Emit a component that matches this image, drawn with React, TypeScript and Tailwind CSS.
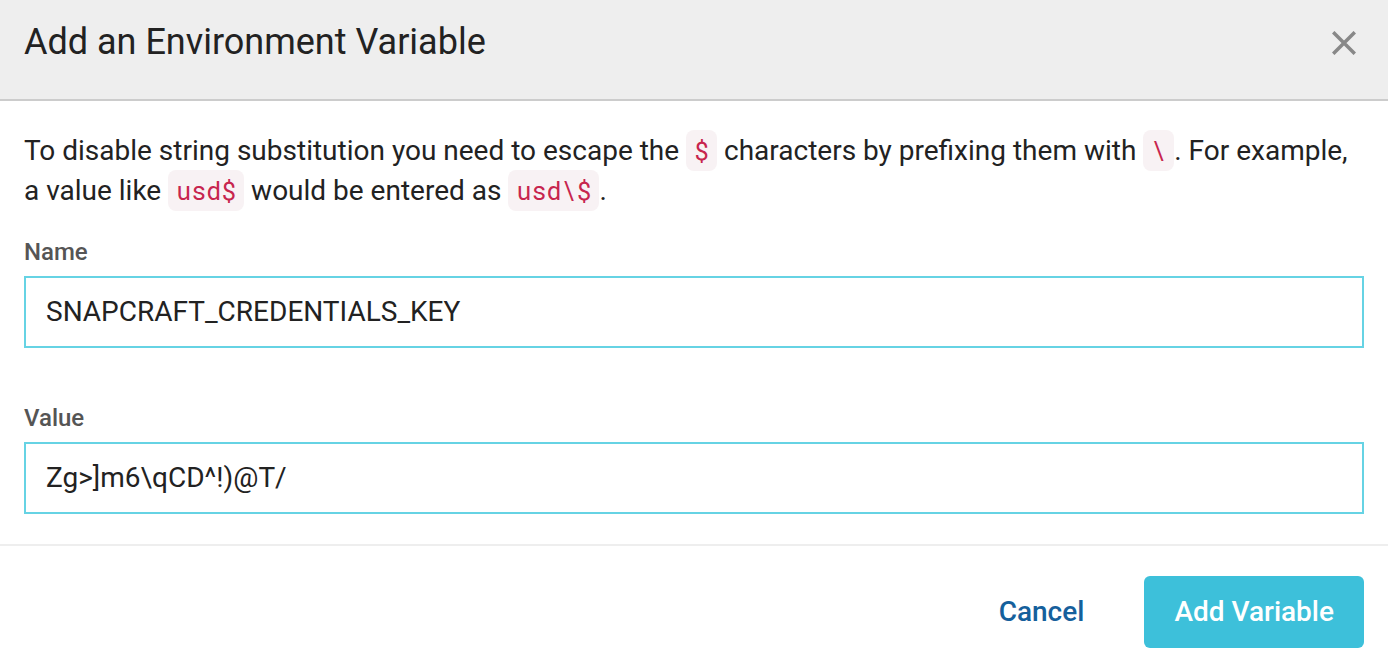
import { useState } from "react";
import type { ReactNode } from "react";

function Code({ children }: { children: ReactNode }) {
  return (
    <code className="rounded-lg bg-[#f8f2f4] px-2 py-1 font-['Roboto_Mono','Liberation_Mono',monospace] text-[25px] leading-none text-[#c7254e]">
      {children}
    </code>
  );
}

function Field({ id, label, initial }: { id: string; label: string; initial: string }) {
  const [value, setValue] = useState(initial);
  return (
    <div className="flex flex-col gap-2">
      <label htmlFor={id} className="text-2xl font-medium leading-8 text-[#555555]">
        {label}
      </label>
      <input
        id={id}
        type="text"
        value={value}
        onChange={(e) => setValue(e.target.value)}
        className="h-18 w-full border-2 border-[#66d3e4] bg-white px-5 pb-0.5 text-[28px] text-[#222222] outline-none"
      />
    </div>
  );
}

export default function App() {
  return (
    <section
      role="dialog"
      aria-labelledby="dialog-title"
      className="min-h-screen bg-white font-['Roboto',sans-serif] text-[#222222]"
    >
      <header className="flex items-start justify-between border-b-2 border-[#cccccc] bg-[#eeeeee] px-6 pt-5 pb-[35px]">
        <h1 id="dialog-title" className="text-4xl leading-11">
          Add an Environment Variable
        </h1>
        <button type="button" aria-label="Close" className="px-2 pt-[11px]">
          <svg viewBox="0 0 24 24" className="size-6" fill="none" stroke="#888888" strokeWidth="3.5">
            <path d="M1.2 1.2L22.8 22.8M22.8 1.2L1.2 22.8" />
          </svg>
        </button>
      </header>
      <div className="flex flex-col px-6 pt-[30px] pb-[30px]">
        <p className="mb-[25px] text-[28px] leading-10">
          To disable string substitution you need to escape the <Code>$</Code> characters by prefixing them with{" "}
          <Code>\</Code>. For example, a value like <Code>usd$</Code> would be entered as <Code>usd\$</Code>.
        </p>
        <div className="flex flex-col gap-[54px]">
          <Field id="name" label="Name" initial="SNAPCRAFT_CREDENTIALS_KEY" />
          <Field id="value" label="Value" initial="Zg>]m6\qCD^!)@T/" />
        </div>
      </div>
      <footer className="flex justify-end gap-[30px] border-t-2 border-[#eeeeee] px-6 pt-[30px]">
        <button type="button" className="h-18 rounded px-[30px] text-[28px] font-medium text-[#15609c]">
          Cancel
        </button>
        <button type="button" className="h-18 rounded-md bg-[#3dc0da] px-[30px] text-[28px] font-medium text-white">
          Add Variable
        </button>
      </footer>
    </section>
  );
}
